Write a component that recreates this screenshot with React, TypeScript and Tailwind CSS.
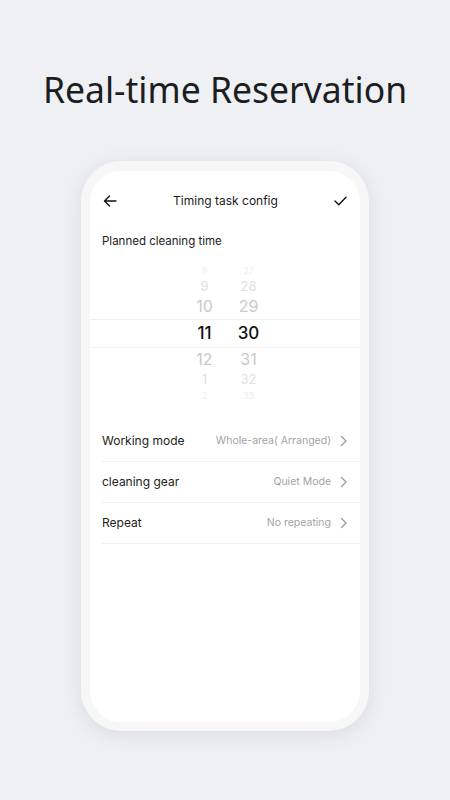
import React from 'react';

const rows = [
  { label: 'Working mode', value: 'Whole-area( Arranged)' },
  { label: 'cleaning gear', value: 'Quiet Mode' },
  { label: 'Repeat', value: 'No repeating' },
];

function Chevron() {
  return (
    <svg width="8" height="12" viewBox="0 0 8 12" fill="none" className="ml-[9px]">
      <path d="M1.5 1.5 6 6l-4.5 4.5" stroke="#9a9a9a" strokeWidth="1.3" strokeLinecap="round" strokeLinejoin="round" />
    </svg>
  );
}

function Wheel({ items }: { items: string[] }) {
  // items: [far-top, top2, top1, selected, bottom1, bottom2, far-bottom]
  return (
    <div className="flex flex-col items-center w-[30px]">
      <div className="h-[12px] flex items-center text-[9px] text-[#eceef0] overflow-hidden">{items[0]}</div>
      <div className="h-[20px] flex items-center text-[13px] text-[#dcdfe3]">{items[1]}</div>
      <div className="h-[20px] flex items-center text-[16px] text-[#c6c9cf]">{items[2]}</div>
      <div className="h-[34px] flex items-center text-[17px] font-medium text-[#111]">{items[3]}</div>
      <div className="h-[18px] flex items-center text-[16px] text-[#c6c9cf]">{items[4]}</div>
      <div className="h-[22px] flex items-center text-[13px] text-[#dcdfe3]">{items[5]}</div>
      <div className="h-[10px] flex items-center text-[9px] text-[#eceef0] overflow-hidden">{items[6]}</div>
    </div>
  );
}

export default function App() {
  return (
    <main className="w-[450px] h-[800px] bg-[#eef0f4] flex flex-col items-center overflow-hidden">
      <h1
        className="mt-[62px] text-[35.5px] leading-[54px] text-[#1b1d21]"
        style={{ fontFamily: '"Noto Sans", sans-serif' }}
      >
        Real-time Reservation
      </h1>

      {/* Phone frame */}
      <div className="mt-[45px] w-[288px] h-[570px] rounded-[40px] bg-[#f7f7f7] p-[9px] pt-[10px] shadow-[0_4px_18px_rgba(120,125,140,0.18)]">
        <div
          className="w-full h-full rounded-[31px] bg-white flex flex-col"
          style={{ fontFamily: 'Inter, "Noto Sans", sans-serif' }}
        >
          {/* Header */}
          <div className="flex items-center justify-between h-[40px] mt-[10px] px-[13px]">
            <svg width="14" height="12" viewBox="0 0 14 12" fill="none">
              <path d="M13 6H1.5M6.5 1 1.5 6l5 5" stroke="#111" strokeWidth="1.4" strokeLinecap="round" strokeLinejoin="round" />
            </svg>
            <span className="text-[12px] text-[#1a1a1a]">Timing task config</span>
            <svg width="13" height="10" viewBox="0 0 13 10" fill="none">
              <path d="M1 5l3.8 3.8L12 1.2" stroke="#111" strokeWidth="1.4" strokeLinecap="round" strokeLinejoin="round" />
            </svg>
          </div>

          <div className="px-[12px] mt-[12px] text-[11.5px] text-[#222]">Planned cleaning time</div>

          {/* Picker */}
          <div className="relative mt-[14px] flex justify-center gap-[14px] pl-[3px]">
            <div className="absolute left-0 right-0 top-[55px] h-[29px] border-t border-b border-[#f0f1f3]" />
            <Wheel items={['8', '9', '10', '11', '12', '1', '2']} />
            <Wheel items={['27', '28', '29', '30', '31', '32', '33']} />
          </div>

          {/* Rows */}
          <div className="mt-[21px] pl-[12px]">
            {rows.map((r) => (
              <div key={r.label} className="flex items-center justify-between h-[41px] border-b border-[#f0f1f3] pr-[12px]">
                <span className="text-[12px] text-[#222]">{r.label}</span>
                <span className="flex items-center text-[10.5px] text-[#a3a3a3]">
                  {r.value}
                  <Chevron />
                </span>
              </div>
            ))}
          </div>
        </div>
      </div>
    </main>
  );
}
